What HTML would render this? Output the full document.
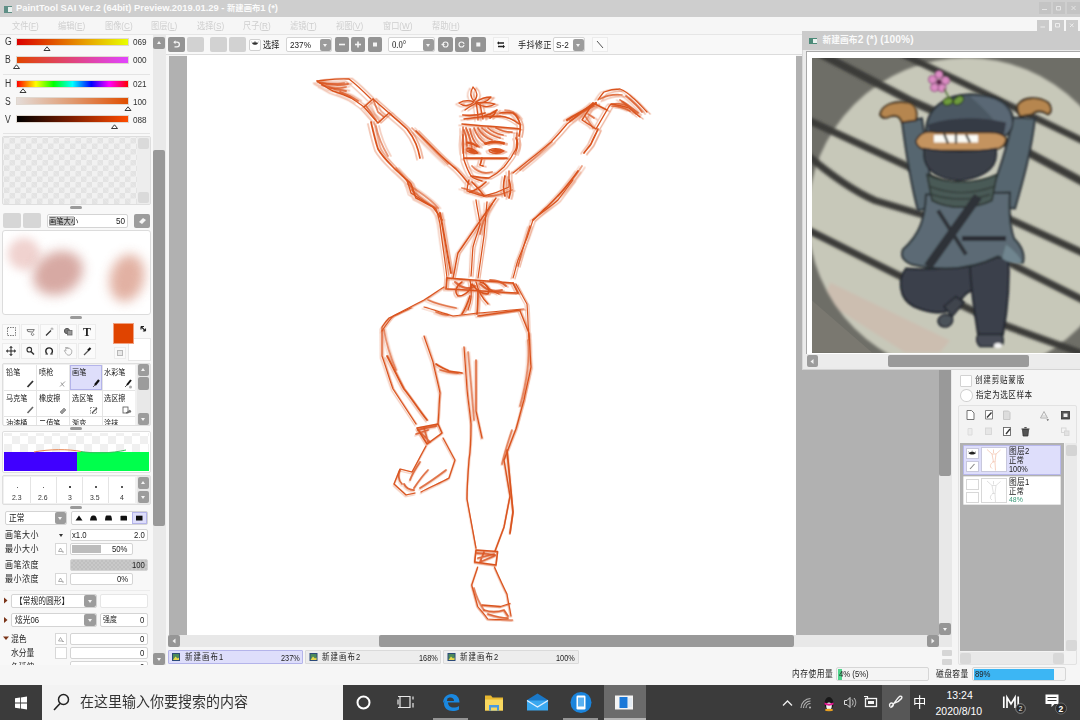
<!DOCTYPE html>
<html lang="zh-CN">
<head>
<meta charset="utf-8">
<title>PaintTool SAI</title>
<style>
*{box-sizing:border-box;margin:0;padding:0}
html,body{width:1080px;height:720px;overflow:hidden;background:#f6f6f6}
body{position:relative;font-family:"Liberation Sans","Noto Sans CJK SC",sans-serif;font-size:9px;color:#222;line-height:1}
.a{position:absolute}
.t{position:absolute;white-space:nowrap;line-height:1;transform:scaleX(.86);transform-origin:0 0}
.btn{position:absolute;background:#969696;border-radius:2px}
.btnl{position:absolute;background:#d2d2d2;border-radius:2px}
.fld{position:absolute;background:#fff;border:1px solid #d4d4d4;border-radius:2px}
.grip{position:absolute;width:12px;height:3px;background:#9a9a9a;border-radius:2px;left:70px}
.wbtn{position:absolute;width:12px;height:11px;background:#c4c4c4}
.ic{position:absolute;background:#fbfbfb;border:1px solid #ececec}
.arr{position:absolute;width:0;height:0;border-left:2.5px solid transparent;border-right:2.5px solid transparent;border-top:3px solid #f4f4f4}
.arru{position:absolute;width:0;height:0;border-left:2.5px solid transparent;border-right:2.5px solid transparent;border-bottom:3px solid #f4f4f4}
</style>
</head>
<body>

<!-- ================= TITLE BAR ================= -->
<div class="a" id="titlebar" style="left:0;top:0;width:1080px;height:17px;background:#cecece"></div>
<div class="a" style="left:3.500px;top:6px;width:8px;height:6.500px;background:#5f8f86"></div>
<div class="a" style="left:7.500px;top:7px;width:4px;height:4.500px;background:#e8f0ee"></div>
<div class="t" style="left:16px;top:3px;font-size:9.4px;font-weight:bold;color:#fbfbfb;transform:none">PaintTool SAI Ver.2 (64bit) Preview.2019.01.29 - <span style="font-size:8.300px">新建画布</span>1 (*)</div>
<div class="wbtn" style="left:1039px;top:2px;width:11.500px;height:12px"></div>
<div class="wbtn" style="left:1052.500px;top:2px;width:12px;height:12px"></div>
<div class="wbtn" style="left:1066.500px;top:2px;width:13.500px;height:12px"></div>


<!-- ================= MENU BAR ================= -->
<div class="a" id="menubar" style="left:0;top:17px;width:1080px;height:17px;background:#f6f6f6"></div>
<div class="a" style="left:0;top:34px;width:1080px;height:1px;background:#e6e6e6"></div>
<div class="t" style="left:12px;top:21px;font-size:9.5px;color:#cfcfcf">文件(<u>F</u>)</div>
<div class="t" style="left:58px;top:21px;font-size:9.5px;color:#cfcfcf">编辑(<u>E</u>)</div>
<div class="t" style="left:105px;top:21px;font-size:9.5px;color:#cfcfcf">图像(<u>C</u>)</div>
<div class="t" style="left:151px;top:21px;font-size:9.5px;color:#cfcfcf">图层(<u>L</u>)</div>
<div class="t" style="left:197px;top:21px;font-size:9.5px;color:#cfcfcf">选择(<u>S</u>)</div>
<div class="t" style="left:243px;top:21px;font-size:9.5px;color:#cfcfcf">尺子(<u>R</u>)</div>
<div class="t" style="left:290px;top:21px;font-size:9.5px;color:#cfcfcf">滤镜(<u>T</u>)</div>
<div class="t" style="left:336px;top:21px;font-size:9.5px;color:#cfcfcf">视图(<u>V</u>)</div>
<div class="t" style="left:383px;top:21px;font-size:9.5px;color:#cfcfcf">窗口(<u>W</u>)</div>
<div class="t" style="left:432px;top:21px;font-size:9.5px;color:#cfcfcf">帮助(<u>H</u>)</div>
<div class="wbtn" style="left:1037px;top:19.500px;width:11.500px;height:11.500px;background:#cbcbcb"></div>
<div class="wbtn" style="left:1051.500px;top:19.500px;width:12px;height:11.500px;background:#cbcbcb"></div>
<div class="wbtn" style="left:1066px;top:19.500px;width:11.500px;height:11.500px;background:#cbcbcb"></div>

<svg class="a" style="left:1036px;top:0" width="44" height="34" viewBox="1036 0 44 34" fill="none" stroke="#e4e4e4" stroke-width="1"><path d="M1042 9.500h5M1056.500 6.500h4v3.500h-4zM1071.500 6l4 4M1075.500 6l-4 4"/><path d="M1040.500 27h4.500M1055.500 23.500h4v3.500h-4zM1070 23.500l3.500 3.500M1073.500 23.500l-3.500 3.500" stroke="#ededed"/></svg>

<!-- ================= LEFT PANEL ================= -->
<div class="a" id="leftpanel" style="left:0;top:35px;width:153px;height:630px;background:#f8f8f8"></div>
<!-- color sliders -->
<div class="t" style="left:5px;top:37px;font-size:10px;color:#333">G</div>
<div class="a" style="left:16px;top:38px;width:113px;height:8px;border:1px solid #e0d8d0;background:linear-gradient(90deg,#dc0000,#e04400 27%,#e8a000 62%,#e8ff00)"></div>
<div class="t" style="left:133px;top:37px;font-size:9.5px;color:#333">069</div>
<div class="t" style="left:5px;top:55px;font-size:10px;color:#333">B</div>
<div class="a" style="left:16px;top:56px;width:113px;height:8px;border:1px solid #e0d8d0;background:linear-gradient(90deg,#e04400,#e0447c 50%,#e044ff)"></div>
<div class="t" style="left:133px;top:55px;font-size:9.5px;color:#333">000</div>
<div class="a" style="left:3px;top:74px;width:147px;height:1px;background:#e4e4e4"></div>
<div class="t" style="left:5px;top:79px;font-size:10px;color:#333">H</div>
<div class="a" style="left:16px;top:80px;width:113px;height:8px;border:1px solid #e0d8d0;background:linear-gradient(90deg,#f00,#ff0 17%,#0f0 33%,#0ff 50%,#00f 67%,#f0f 83%,#f00)"></div>
<div class="t" style="left:133px;top:79px;font-size:9.5px;color:#333">021</div>
<div class="t" style="left:5px;top:97px;font-size:10px;color:#333">S</div>
<div class="a" style="left:16px;top:97px;width:113px;height:8px;border:1px solid #e0d8d0;background:linear-gradient(90deg,#e4dcd8,#e09a70 50%,#e04e00)"></div>
<div class="t" style="left:133px;top:97px;font-size:9.5px;color:#333">100</div>
<div class="t" style="left:5px;top:115px;font-size:10px;color:#333">V</div>
<div class="a" style="left:16px;top:115px;width:113px;height:8px;border:1px solid #e0d8d0;background:linear-gradient(90deg,#000,#801e00 50%,#ff4c00)"></div>
<div class="t" style="left:133px;top:115px;font-size:9.5px;color:#333">088</div>
<svg class="a" style="left:0;top:35px" width="153" height="100" viewBox="0 35 153 100">
 <g fill="#fff" stroke="#222" stroke-width="0.9">
  <path d="M44 50.5 l3-3.7 l3 3.7z"/><path d="M13.5 68.5 l3-3.7 l3 3.7z"/><path d="M20 92.5 l3-3.7 l3 3.7z"/><path d="M125 110.5 l3-3.7 l3 3.7z"/><path d="M111.5 128.5 l3-3.7 l3 3.7z"/>
 </g>
</svg>
<div class="a" style="left:3px;top:133px;width:147px;height:1px;background:#e4e4e4"></div>
<!-- swatch panel -->
<div class="a" style="left:2px;top:136px;width:149px;height:69px;border:1px solid #dedede;border-radius:2px;background-color:#f1f1f1;background-image:linear-gradient(45deg,#e3e3e3 25%,transparent 25%,transparent 75%,#e3e3e3 75%),linear-gradient(45deg,#e3e3e3 25%,transparent 25%,transparent 75%,#e3e3e3 75%);background-size:11px 11px;background-position:1px 1px,6.5px 6.5px"></div>
<div class="a" style="left:137px;top:137px;width:13px;height:67px;background:#ededed"></div>
<div class="a" style="left:138px;top:138px;width:11px;height:11px;background:#dadada;border-radius:2px"></div>
<div class="a" style="left:138px;top:192px;width:11px;height:11px;background:#dadada;border-radius:2px"></div>
<div class="grip" style="top:206px"></div>
<!-- scratch header row -->
<div class="btnl" style="left:3px;top:213px;width:18px;height:15px;background:#d6d6d6"></div>
<div class="btnl" style="left:23px;top:213px;width:18px;height:15px;background:#d6d6d6"></div>
<div class="fld" style="left:47px;top:214px;width:81px;height:14px"></div>
<div class="a" style="left:48.5px;top:216px;width:25px;height:10px;background:#c4c4c4"></div>
<div class="t" style="left:49px;top:216.5px;font-size:8.5px;color:#222">画笔大小</div>
<div class="t" style="left:115.5px;top:216px;font-size:9.5px;color:#222">50</div>
<div class="btn" style="left:134px;top:214px;width:16px;height:14px;background:#9c9c9c"></div>
<svg class="a" style="left:138px;top:217px" width="9" height="8" viewBox="0 0 9 8"><path d="M1 5 L5 1 L8 3 L4 7z" fill="#f4f4f4"/></svg>
<!-- scratchpad -->
<div class="a" style="left:2px;top:230px;width:149px;height:85px;border:1px solid #dcdcdc;border-radius:3px;background:#fff;overflow:hidden">
 <div class="a" style="left:5px;top:7px;width:32px;height:32px;border-radius:50%;background:#ebc3bf;filter:blur(5px);opacity:.75"></div>
 <div class="a" style="left:29px;top:21px;width:52px;height:42px;border-radius:50%;background:#d3a099;filter:blur(6px);opacity:.9;transform:rotate(-28deg)"></div>
 <div class="a" style="left:107px;top:23px;width:34px;height:48px;border-radius:50%;background:#dfa999;filter:blur(6px);opacity:.9;transform:rotate(14deg)"></div>
</div>
<div class="grip" style="top:316px"></div>

<!-- tool icon rows -->
<div class="ic" style="left:2px;top:324px;width:18px;height:16px"></div>
<div class="ic" style="left:21px;top:324px;width:18px;height:16px"></div>
<div class="ic" style="left:40px;top:324px;width:18px;height:16px"></div>
<div class="ic" style="left:59px;top:324px;width:18px;height:16px"></div>
<div class="ic" style="left:78px;top:324px;width:18px;height:16px"></div>
<div class="ic" style="left:2px;top:343px;width:18px;height:16px"></div>
<div class="ic" style="left:21px;top:343px;width:18px;height:16px"></div>
<div class="ic" style="left:40px;top:343px;width:18px;height:16px"></div>
<div class="ic" style="left:59px;top:343px;width:18px;height:16px"></div>
<div class="ic" style="left:78px;top:343px;width:18px;height:16px"></div>
<svg class="a" style="left:0;top:320px" width="153" height="42" viewBox="0 320 153 42" fill="none" stroke="#333" stroke-width="1">
 <rect x="7.500" y="327.500" width="8" height="8" stroke-dasharray="1.500 1" stroke="#5a5a5a" stroke-width="0.800"/>
 <path d="M27 329.600h7.300l-1.600 2.500l-4.900-.600z" stroke="#666" stroke-width="0.900"/><path d="M32.500 332.600c-1.600 1-1.500 2.600 0 2.800c1.300 0 1.600-1 .8-1.900" stroke="#666" stroke-width="0.900"/>
 <path d="M46 335.5l5-5" stroke="#333" stroke-width="1.3"/><path d="M52 327.5v2M50.5 329h3" stroke="#888" stroke-width="0.7"/>
 <circle cx="67" cy="331" r="2.6" fill="#777" stroke="#555"/><rect x="67.5" y="330.500" width="4.500" height="4.500" fill="#999" stroke="#666" stroke-width="0.8"/>
 <path d="M11 346.500v9M6.500 351h9M11 346.500l-1.300 1.500M11 346.500l1.300 1.500M11 355.500l-1.300-1.500M11 355.500l1.300-1.500M6.500 351l1.500-1.300M6.500 351l1.500 1.300M15.500 351l-1.500-1.300M15.500 351l-1.500 1.300" stroke="#222" stroke-width="1"/>
 <circle cx="29.300" cy="349.700" r="2.300" stroke="#333" stroke-width="1.100"/><path d="M31 351.500l3 3" stroke="#333" stroke-width="1.500"/>
 <path d="M46.800 353.500a3.300 3.300 0 1 1 4.600 0" stroke="#222" stroke-width="1.400"/><path d="M45.500 354h2.500M50.200 354h2.500" stroke="#222" stroke-width="1"/>
 <path d="M65.600 349.200c.5-1.500 2-1.500 2.500-.5c.8-.8 2-.5 2.200.5c1 0 1.500.8 1.500 2c0 2.500-1 4-3 4c-1.500 0-2.500-1-3.200-2.500l-1.300-2c.5-.8 1.300-.5 1.800 0z" stroke="#a4a4a4" stroke-width="0.900"/><path d="M65 347.800h3.500" stroke="#8a8a8a" stroke-width="0.800"/>
 <path d="M84 355l4.500-4.500" stroke="#555" stroke-width="1.200"/><path d="M88 350.500l2.500-2.500" stroke="#111" stroke-width="2.200"/>
 <path d="M141 326.500l4.500 4.500M141 326.500v3M141 326.500h3M145.500 331v-2.600M145.500 331h-2.600" stroke="#222" stroke-width="1.100"/>
</svg>
<div class="t" style="left:82.500px;top:326px;font-family:'Liberation Serif',serif;font-weight:bold;font-size:12px;color:#222;transform:scaleX(.98)">T</div>
<!-- color swatches -->
<div class="a" style="left:128px;top:338px;width:23px;height:23px;background:#fff;border:1px solid #e6e6e6"></div>
<div class="a" style="left:113px;top:323px;width:21px;height:21px;background:#e04400;border:1px solid #f0a080"></div>
<div class="ic" style="left:114px;top:347px;width:12px;height:12px;background:#fafafa"></div>
<div class="a" style="left:117px;top:350px;width:6px;height:6px;background:#e8e8e8;border:1px solid #b8b8b8"></div>
<!-- brush tool grid -->
<div class="a" style="left:2px;top:363px;width:149px;height:63px;border:1px solid #dedede;border-radius:2px;background:#f1f1f1"></div>
<div class="a" style="left:4px;top:365px;width:131px;height:60px;background:#e4e4e4;overflow:hidden">
 <div class="a" style="left:0;top:0;width:32px;height:25px;background:#fff"></div>
 <div class="a" style="left:33px;top:0;width:32px;height:25px;background:#fff"></div>
 <div class="a" style="left:66px;top:0;width:32px;height:25px;background:#dedefb;border:1px solid #b4b4ea"></div>
 <div class="a" style="left:99px;top:0;width:32px;height:25px;background:#fff"></div>
 <div class="a" style="left:0;top:26px;width:32px;height:25px;background:#fff"></div>
 <div class="a" style="left:33px;top:26px;width:32px;height:25px;background:#fff"></div>
 <div class="a" style="left:66px;top:26px;width:32px;height:25px;background:#fff"></div>
 <div class="a" style="left:99px;top:26px;width:32px;height:25px;background:#fff"></div>
 <div class="a" style="left:0;top:52px;width:32px;height:25px;background:#fff"></div>
 <div class="a" style="left:33px;top:52px;width:32px;height:25px;background:#fff"></div>
 <div class="a" style="left:66px;top:52px;width:32px;height:25px;background:#fff"></div>
 <div class="a" style="left:99px;top:52px;width:32px;height:25px;background:#fff"></div>
 <div class="t" style="left:2px;top:3px;font-size:8.300px;color:#222">铅笔</div>
 <div class="t" style="left:35px;top:3px;font-size:8.300px;color:#222">喷枪</div>
 <div class="t" style="left:68px;top:3px;font-size:8.300px;color:#222">画笔</div>
 <div class="t" style="left:100px;top:3px;font-size:8.300px;color:#222">水彩笔</div>
 <div class="t" style="left:2px;top:29px;font-size:8.300px;color:#222">马克笔</div>
 <div class="t" style="left:35px;top:29px;font-size:8.300px;color:#222">橡皮擦</div>
 <div class="t" style="left:68px;top:29px;font-size:8.300px;color:#222">选区笔</div>
 <div class="t" style="left:100px;top:29px;font-size:8.300px;color:#222">选区擦</div>
 <div class="t" style="left:2px;top:54px;font-size:8.300px;color:#222">油漆桶</div>
 <div class="t" style="left:35px;top:54px;font-size:8.300px;color:#222">二值笔</div>
 <div class="t" style="left:68px;top:54px;font-size:8.300px;color:#222">渐变</div>
 <div class="t" style="left:100px;top:54px;font-size:8.300px;color:#222">涂抹</div>
 <svg class="a" style="left:0;top:0" width="131" height="60" viewBox="0 0 131 60" fill="none">
  <path d="M23.500 22l5.500-6" stroke="#333" stroke-width="1.800"/>
  <path d="M56 21.500l5-5M57 17.500l3 4" stroke="#999" stroke-width="1"/>
  <path d="M89 22l2-2" stroke="#555" stroke-width="1"/><path d="M91 20l4-5" stroke="#111" stroke-width="2.200"/>
  <path d="M121 22l2-2" stroke="#555" stroke-width="1"/><path d="M123 20l4-5" stroke="#111" stroke-width="2"/><circle cx="126.500" cy="22" r="1.500" fill="#aaa"/>
  <path d="M23.500 48l5.500-6" stroke="#666" stroke-width="1.600"/>
  <path d="M56 47l4-4l2 2l-4 4z" fill="#999" stroke="#777" stroke-width="0.600"/>
  <rect x="86.500" y="42.500" width="6" height="6" stroke="#777" stroke-width="0.800" stroke-dasharray="1.500 1"/><path d="M88 48l5-5" stroke="#555" stroke-width="1.200"/>
  <rect x="119" y="42" width="5" height="6" stroke="#555" stroke-width="0.800"/><path d="M122 48l4-3l1 2z" fill="#777" stroke="#555" stroke-width="0.600"/>
 </svg>
</div>
<div class="a" style="left:137px;top:364px;width:13px;height:61px;background:#e8e8e8"></div>
<div class="btn" style="left:138px;top:364px;width:11px;height:12px;background:#9c9c9c"></div><div class="arru" style="left:141px;top:368px"></div>
<div class="btn" style="left:138px;top:377px;width:11px;height:13px;background:#9c9c9c"></div>
<div class="btn" style="left:138px;top:413px;width:11px;height:12px;background:#9c9c9c"></div><div class="arr" style="left:141px;top:418px"></div>
<div class="grip" style="top:427px"></div>

<!-- brush preview -->
<div class="a" style="left:2px;top:431px;width:149px;height:42px;border:1px solid #dedede;border-radius:2px;background:#fff"></div>
<div class="a" style="left:4px;top:433px;width:145px;height:19px;background-color:#fff;background-image:linear-gradient(45deg,#f0f0f0 25%,transparent 25%,transparent 75%,#f0f0f0 75%),linear-gradient(45deg,#f0f0f0 25%,transparent 25%,transparent 75%,#f0f0f0 75%);background-size:16px 16px;background-position:0 3px,8px 11px"></div>
<div class="a" style="left:4px;top:452px;width:73px;height:19px;background:#4000ff"></div>
<div class="a" style="left:77px;top:452px;width:72px;height:19px;background:#00ff4c"></div>
<svg class="a" style="left:4px;top:447px" width="145" height="8" viewBox="0 0 145 8" fill="none"><path d="M30 5c15-3 35-3 47-.5" stroke="#e8804c" stroke-width="1"/><path d="M77 4.500c12 2 30 2 45-1.500" stroke="#3cc060" stroke-width="1"/></svg>
<!-- size presets -->
<div class="a" style="left:2px;top:475px;width:149px;height:30px;border:1px solid #dedede;border-radius:2px;background:#f1f1f1"></div>
<div class="a" style="left:4px;top:477px;width:131px;height:26px;background:#e4e4e4">
 <div class="a" style="left:0;top:0;width:26px;height:26px;background:#fff"></div>
 <div class="a" style="left:27px;top:0;width:25px;height:26px;background:#fff"></div>
 <div class="a" style="left:53px;top:0;width:25px;height:26px;background:#fff"></div>
 <div class="a" style="left:79px;top:0;width:25px;height:26px;background:#fff"></div>
 <div class="a" style="left:105px;top:0;width:26px;height:26px;background:#fff"></div>
 <div class="a" style="left:13px;top:9.500px;width:1.200px;height:1.200px;background:#333;border-radius:50%"></div>
 <div class="a" style="left:39px;top:9.500px;width:1.400px;height:1.400px;background:#333;border-radius:50%"></div>
 <div class="a" style="left:65px;top:9.300px;width:1.600px;height:1.600px;background:#222;border-radius:50%"></div>
 <div class="a" style="left:91px;top:9.200px;width:1.900px;height:1.900px;background:#222;border-radius:50%"></div>
 <div class="a" style="left:117px;top:9px;width:2.200px;height:2.200px;background:#222;border-radius:50%"></div>
 <div class="t" style="left:8px;top:16.500px;font-size:8px;color:#333">2.3</div>
 <div class="t" style="left:34px;top:16.500px;font-size:8px;color:#333">2.6</div>
 <div class="t" style="left:63.500px;top:16.500px;font-size:8px;color:#333">3</div>
 <div class="t" style="left:86px;top:16.500px;font-size:8px;color:#333">3.5</div>
 <div class="t" style="left:115.500px;top:16.500px;font-size:8px;color:#333">4</div>
</div>
<div class="a" style="left:137px;top:476px;width:13px;height:28px;background:#e8e8e8"></div>
<div class="btn" style="left:138px;top:477px;width:11px;height:12px;background:#9c9c9c"></div><div class="arru" style="left:141px;top:481px"></div>
<div class="btn" style="left:138px;top:491px;width:11px;height:12px;background:#9c9c9c"></div><div class="arr" style="left:141px;top:496px"></div>
<div class="grip" style="top:506px"></div>
<!-- blend mode + shapes -->
<div class="fld" style="left:5px;top:511px;width:62px;height:14px"></div>
<div class="t" style="left:9px;top:513.500px;font-size:9px;color:#222">正常</div>
<div class="btn" style="left:55px;top:512px;width:11px;height:12px;background:#9c9c9c"></div><div class="arr" style="left:58px;top:517px"></div>
<div class="fld" style="left:71px;top:511px;width:77px;height:14px"></div>
<div class="a" style="left:132px;top:512px;width:15px;height:12px;background:#dedefb;border:1px solid #b4b4ea"></div>
<svg class="a" style="left:71px;top:511px" width="77" height="14" viewBox="0 0 77 14" fill="#111"><path d="M4.500 9.500l3.500-5l3.500 5z"/><path d="M19 9.500c.500-4 1.500-5 3.500-5s3 1 3.500 5z"/><path d="M34 9.500c.300-4 .800-5 1.800-5h3.400c1 0 1.500 1 1.800 5z"/><path d="M49.500 9.500v-4q0-.8 .8-.8h4.900q.8 0 .8.800v4z"/><rect x="65" y="4.700" width="6.500" height="4.800"/></svg>
<!-- brush params -->
<div class="t" style="left:5px;top:530.500px;font-size:9.300px;color:#222;letter-spacing:.6px">画笔大小</div>
<div class="arr" style="left:58.500px;top:534px;border-top-color:#333"></div>
<div class="fld" style="left:70px;top:529px;width:78px;height:12px"></div>
<div class="t" style="left:72px;top:531px;font-size:9px;color:#222">x1.0</div>
<div class="t" style="left:133.500px;top:531px;font-size:9px;color:#222">2.0</div>
<div class="t" style="left:5px;top:544.500px;font-size:9.300px;color:#222;letter-spacing:.6px">最小大小</div>
<div class="ic" style="left:55px;top:543px;width:12px;height:12px;background:#fff;border-color:#d8d8d8"></div>
<div class="fld" style="left:70px;top:543px;width:63px;height:12px"></div>
<div class="a" style="left:72px;top:545px;width:29px;height:8px;background:#bcbcbc"></div>
<div class="t" style="left:112px;top:545px;font-size:9px;color:#222">50%</div>
<div class="t" style="left:5px;top:560.500px;font-size:9.300px;color:#222;letter-spacing:.6px">画笔浓度</div>
<div class="fld" style="left:70px;top:559px;width:78px;height:12px;background:#c9c9c9;background-image:linear-gradient(45deg,#c0c0c0 25%,transparent 25%,transparent 75%,#c0c0c0 75%),linear-gradient(45deg,#c0c0c0 25%,transparent 25%,transparent 75%,#c0c0c0 75%);background-size:4px 4px;background-position:0 0,2px 2px"></div>
<div class="t" style="left:131.500px;top:561px;font-size:9px;color:#222">100</div>
<div class="t" style="left:5px;top:574.500px;font-size:9.300px;color:#222;letter-spacing:.6px">最小浓度</div>
<div class="ic" style="left:55px;top:573px;width:12px;height:12px;background:#fff;border-color:#d8d8d8"></div>
<div class="fld" style="left:70px;top:573px;width:63px;height:12px"></div>
<div class="t" style="left:117px;top:575px;font-size:9px;color:#222">0%</div>
<div class="a" style="left:3px;top:590px;width:147px;height:1px;background:#ececec"></div>

<div class="fld" style="left:11px;top:594px;width:86px;height:14px"></div>
<div class="t" style="left:15px;top:596.500px;font-size:9px;color:#222">【常规的圆形】</div>
<div class="btn" style="left:84px;top:595px;width:12px;height:12px;background:#9c9c9c"></div><div class="arr" style="left:87.500px;top:600px"></div>
<div class="fld" style="left:100px;top:594px;width:48px;height:14px;border-color:#e6e6e6"></div>
<div class="fld" style="left:11px;top:613px;width:86px;height:14px"></div>
<div class="t" style="left:15px;top:615.500px;font-size:9px;color:#222">炫光06</div>
<div class="btn" style="left:84px;top:614px;width:12px;height:12px;background:#9c9c9c"></div><div class="arr" style="left:87.500px;top:619px"></div>
<div class="fld" style="left:100px;top:613px;width:48px;height:14px"></div>
<div class="t" style="left:103px;top:616px;font-size:8px;color:#222">强度</div>
<div class="t" style="left:140px;top:615.500px;font-size:9px;color:#222">0</div>
<div class="t" style="left:11px;top:634.500px;font-size:9px;color:#222">混色</div>
<div class="ic" style="left:55px;top:633px;width:12px;height:12px;background:#fff;border-color:#d8d8d8"></div>
<div class="fld" style="left:70px;top:633px;width:78px;height:12px"></div>
<div class="t" style="left:140px;top:635px;font-size:9px;color:#222">0</div>
<div class="t" style="left:11px;top:648.500px;font-size:9px;color:#222">水分量</div>
<div class="ic" style="left:55px;top:647px;width:12px;height:12px;background:#fff;border-color:#d8d8d8"></div>
<div class="fld" style="left:70px;top:647px;width:78px;height:12px"></div>
<div class="t" style="left:140px;top:649px;font-size:9px;color:#222">0</div>
<div class="a" style="left:0;top:661px;width:153px;height:4px;overflow:hidden"><div class="t" style="left:11px;top:1.500px;font-size:9px;color:#222">色延伸</div><div class="fld" style="left:70px;top:0;width:78px;height:12px"></div><div class="t" style="left:140px;top:2px;font-size:9px;color:#222">0</div></div>


<svg class="a" style="left:0;top:540px" width="153" height="125" viewBox="0 540 153 125"><g fill="#7a3418"><path d="M4 597.500l3.500 3l-3.500 3z"/><path d="M4 617l3.500 3l-3.500 3z"/><path d="M3 636.500h6l-3 3.500z"/></g>
<g fill="none" stroke="#999" stroke-width="0.800"><path d="M58.500 551.500l2-3.500l2 3.500zM62 552h2"/><path d="M58.500 581.500l2-3.500l2 3.500zM62 582h2"/><path d="M58.500 641l2-3.500l2 3.500zM62 641.500h2"/></g></svg>
<!-- left panel scrollbar -->
<div class="a" style="left:153px;top:35px;width:13px;height:630px;background:#e9e9e9"></div>
<div class="btn" style="left:153px;top:37px;width:12px;height:12px"></div>
<div class="arru" style="left:156.5px;top:41px"></div>
<div class="a" style="left:153px;top:150px;width:12px;height:376px;background:#999;border-radius:2px"></div>
<div class="btn" style="left:153px;top:653px;width:12px;height:12px"></div>
<div class="arr" style="left:156.5px;top:658px"></div>

<!-- ================= TOOLBAR ================= -->
<div class="a" id="toolbar" style="left:166px;top:35px;width:914px;height:19px;background:#f8f8f8"></div>
<div class="a" style="left:166px;top:54px;width:914px;height:1px;background:#dcdcdc"></div>
<div class="btn" style="left:168px;top:37px;width:17px;height:15px;background:#949494"></div>
<div class="btnl" style="left:187px;top:37px;width:17px;height:15px"></div>
<div class="btnl" style="left:210px;top:37px;width:17px;height:15px"></div>
<div class="btnl" style="left:229px;top:37px;width:17px;height:15px"></div>
<div class="fld" style="left:249px;top:39px;width:12px;height:12px;border-color:#d0d0d0"></div>
<div class="t" style="left:263px;top:39.500px;font-size:9.500px;color:#222">选择</div>
<div class="fld" style="left:286px;top:37px;width:46px;height:15px"></div>
<div class="t" style="left:290px;top:40px;font-size:9.500px;color:#222">237%</div>
<div class="btn" style="left:320px;top:38.500px;width:11px;height:12px;background:#9c9c9c"></div><div class="arr" style="left:323px;top:43.500px"></div>
<div class="btn" style="left:335px;top:37px;width:14px;height:15px;background:#949494"></div>
<div class="btn" style="left:351px;top:37px;width:14px;height:15px;background:#949494"></div>
<div class="btn" style="left:368px;top:37px;width:14px;height:15px;background:#949494"></div>
<div class="fld" style="left:388px;top:37px;width:47px;height:15px"></div>
<div class="t" style="left:392px;top:39.500px;font-size:10px;color:#222;font-family:'Liberation Serif',serif">0.0°</div>
<div class="btn" style="left:423px;top:38.500px;width:11px;height:12px;background:#9c9c9c"></div><div class="arr" style="left:426px;top:43.500px"></div>
<div class="btn" style="left:438px;top:37px;width:14.500px;height:15px;background:#949494"></div>
<div class="btn" style="left:454.500px;top:37px;width:14.500px;height:15px;background:#949494"></div>
<div class="btn" style="left:471px;top:37px;width:14.500px;height:15px;background:#949494"></div>
<div class="ic" style="left:493px;top:37px;width:16px;height:15px"></div>
<div class="t" style="left:517.500px;top:39.500px;font-size:9.500px;color:#222;letter-spacing:.3px">手抖修正</div>
<div class="fld" style="left:553px;top:37px;width:32px;height:15px"></div>
<div class="t" style="left:556px;top:40px;font-size:9.500px;color:#222">S-2</div>
<div class="btn" style="left:573px;top:38.500px;width:11px;height:12px;background:#9c9c9c"></div><div class="arr" style="left:576px;top:43.500px"></div>
<div class="ic" style="left:592px;top:37px;width:16px;height:15px"></div>
<svg class="a" style="left:166px;top:35px" width="460" height="19" viewBox="166 35 460 19" fill="none">
 <path d="M174.500 46.800h2.600a2.300 2.300 0 0 0 0-4.600h-2.600" stroke="#f4f4f4" stroke-width="1.300"/><path d="M175.500 40.200l-2.200 2l2.200 2z" fill="#f4f4f4"/>
 <path d="M252 43.500c1.500-1.800 4.500-1.800 6 0c-1.500 1.800-4.500 1.800-6 0z" fill="#333"/><path d="M251.500 42l1.200 1M258.500 42l-1.200 1M255 41v1.200" stroke="#555" stroke-width="0.700"/>
 <rect x="339" y="43.700" width="6" height="1.600" fill="#f4f4f4"/>
 <rect x="355" y="43.700" width="6" height="1.600" fill="#f4f4f4"/><rect x="357.200" y="41.500" width="1.600" height="6" fill="#f4f4f4"/>
 <rect x="373" y="42.500" width="4" height="4" fill="#f4f4f4"/>
 <circle cx="445.500" cy="44.500" r="2.500" stroke="#f4f4f4" stroke-width="1.200"/><path d="M441.500 44.500h3" stroke="#f4f4f4" stroke-width="1.200"/>
 <circle cx="461.500" cy="44.500" r="2.500" stroke="#f4f4f4" stroke-width="1.200"/><path d="M462.500 44.500h3" stroke="#9a9a9a" stroke-width="1.200"/>
 <rect x="476.300" y="42.500" width="4" height="4" fill="#f4f4f4"/>
 <path d="M498 43h6M498 46.500h6" stroke="#222" stroke-width="1.400"/><path d="M497 43l2-1.800v3.600zM505 46.500l-2-1.800v3.600z" fill="#222"/>
 <path d="M597 41l6 7" stroke="#555" stroke-width="1"/>
</svg>


<!-- ================= MAIN CANVAS ================= -->
<div class="a" id="pasteboard" style="left:168.600px;top:55.600px;width:770px;height:579.400px;background:#b1b1b1"></div>
<div class="a" id="canvas" style="left:187px;top:55px;width:609px;height:580px;background:#fff"></div>
<svg class="a" id="sketch" style="left:187px;top:55px" width="609" height="580" viewBox="187 55 609 580" fill="none" stroke="#da531e" stroke-width="1.750" stroke-linecap="round" stroke-linejoin="round">
 <defs><filter id="sb" x="-5%" y="-5%" width="110%" height="110%"><feGaussianBlur stdDeviation="0.650"/></filter></defs>
 <g filter="url(#sb)" id="skg">
 <!-- left arm + hand -->
 <path d="M317 81c10-1 22-3 32-2c8 6 15 13 22 20" stroke-width="1.300"/>
 <path d="M317 81c6 4 10 7 16 10c6 2 12 4 18 7c5 3 9 6 13 9" stroke-width="1.400"/>
 <path d="M320 83c8 1 16 1 24 0M330 88c6 1 12 0 16-1" opacity=".7"/>
 <path d="M364 107l9-8l16 14l-11 10z" stroke-width="1.500"/>
 <path d="M373 99l5 13l6 5M366 106l10 14" opacity=".7"/>
 <path d="M389 113c7 6 13 11 18 16c4 5 7 10 9 15c2 5 3 9 4 14" />
 <path d="M416 131c8 8 15 15 22 22c6 6 12 11 18 16c5 5 9 10 13 15"/>
 <path d="M412 128c10 10 22 24 36 36" opacity=".55"/>
 <path d="M371 122c2 9 4 18 7 27c4 7 9 12 15 18c6 6 12 11 18 17c2 5 3 9 5 14c6 3 11 6 17 9c3 4 6 8 9 13"/>
 <path d="M376 126c2 10 6 20 12 30M396 168c8 8 14 16 18 26" opacity=".6"/>
 <path d="M408 184c10 8 22 14 30 24" opacity=".6"/>
 <!-- head -->
 <path d="M462 124c20 2 40 3 58 5" stroke-width="1.500"/>
 <path d="M464 119c12-2 24-3 36-3c8 1 14 4 19 8" stroke-width="1.300"/>
 <path d="M500 113c5-1 9-1 13 0c4 3 6 7 7 11c1 4 0 8-1 12" />
 <path d="M505 110c6 0 11 3 14 8" opacity=".6"/>
 <path d="M463 127c0 11 0 22 1 33c2 6 4 11 7 16c3 3 7 4 11 5" stroke-width="1.300"/>
 <path d="M471 176c6 1 12 2 18 2c6-3 11-7 15-11c5-6 9-12 12-18c1-5 1-11 1-16" stroke-width="1.300"/>
 <path d="M466 128c4 8 6 16 6 24M474 128c2 6 6 12 12 16M482 128c4 4 10 8 18 10" opacity=".8"/>
 <path d="M467 148c4 0 8 2 11 5c-4 1-8 0-11-2z" stroke-width="1.300"/>
 <path d="M489 150c5-2 10-2 15 1c-5 3-10 3-14 1z" stroke-width="1.300"/>
 <path d="M486 144c6-2 12-2 18 0M468 143c3 0 6 1 9 3" stroke-width="1.400"/>
 <path d="M464 158c14 0 28 0 43 0" />
 <path d="M482 158c-1 3-1 5-2 7l3 1" />
 <path d="M516 138c2 4 2 8 0 12" />
 <!-- flower on head -->
 <path d="M473 87c-3 5-3 10 1 14c4-4 4-9-1-14z" stroke-width="1.300"/>
 <path d="M459 103c5-3 10-3 15-1c-4 4-10 5-15 1z" stroke-width="1.300"/>
 <path d="M491 97c-6 0-11 2-15 5c5 2 11 0 15-5z" stroke-width="1.300"/>
 <path d="M495 104c-6-2-13-2-19-1c5 4 13 5 19 1z" stroke-width="1.300"/>
 <path d="M465 110c4-3 8-5 11-7M476 102c1 6 2 12 2 18M480 104c1 5 2 10 3 15" stroke-width="1.300"/>
 <path d="M463 115c8 1 16 0 22-2M484 116c5-1 9-3 13-6M490 118c3-2 5-4 6-7" />
 <!-- collar -->
 <path d="M469 180c-1 4-2 7-2 11c6 2 11 4 17 5c9-2 17-5 25-9c0-5 0-11 0-16" stroke-width="1.300"/>
 <path d="M472 182c4 4 8 8 12 14M486 182c-4 4-10 8-16 10M505 176c-2 8-2 14 0 20M509 180c2 6 2 12 0 18" />
 <path d="M462 188c8 2 16 5 24 8M488 196c8 0 16-2 24-6" opacity=".7"/>
 <!-- right arm + hand -->
 <path d="M513 173c5-4 11-9 16-13c8-6 15-12 22-18c6-6 11-12 16-18c9-7 17-14 26-21" stroke-width="1.300"/>
 <path d="M567 120c10-6 20-11 29-17" stroke-width="2.200"/>
 <path d="M570 121c8-6 16-11 24-15" stroke-width="1.600" opacity=".8"/>
 <path d="M520 170c10-8 22-18 32-28" opacity=".6"/>
 <path d="M593 103l14 7l-11 19l-14-9z" stroke-width="1.400"/>
 <path d="M585 116l8 12M588 114l6 4" opacity=".7"/>
 <path d="M598 100c2-3 4-6 6-8c5-2 11-3 16-3c5 2 9 5 13 9c5 4 9 9 14 14" stroke-width="1.300"/>
 <path d="M607 110c1-2 2-4 4-6c6 1 12 2 18 4c4 3 7 6 11 9" stroke-width="1.300"/>
 <path d="M612 104c6-1 12 0 16 2M620 100c6 3 12 8 18 13M626 96c6 5 12 10 16 16" opacity=".8"/>
 <path d="M598 129c-2 5-5 10-7 15c-2 3-5 6-7 9"/>
 <path d="M578 171c-4 6-9 12-14 18c-5 6-11 12-17 18c-5 4-9 9-14 13" />
 <path d="M582 166c-6 10-14 20-24 30" opacity=".55"/>
 <!-- torso -->
 <path d="M407 180c1 4 3 9 4 13c8 5 17 11 25 16c2 5 3 10 4 15c2 18 5 36 7 54" stroke-width="1.200"/>
 <path d="M440 213c4 20 7 40 11 60" stroke-width="1.900"/>
 <path d="M412 190c8 8 16 14 24 18" opacity=".6"/>
 <path d="M573 180c-5 7-10 13-15 20c-8 7-17 13-25 20c-2 6-4 12-6 18c-3 7-6 15-9 22c-2 6-3 12-5 18" stroke-width="1.200"/>
 <path d="M530 226c-4 12-8 26-12 40" stroke-width="1.500" opacity=".85"/>
 <path d="M476 200c1 8 3 16 4 24c-2 8-5 15-7 23c-1 10-1 19-2 29" stroke-width="1.300"/>
 <path d="M496 198c-6 9-12 17-18 26c-7 10-13 19-20 29c-2 8-3 17-5 25" stroke-width="1.500"/>
 <path d="M487 202c-1 11-2 23-3 34c-2 14-4 28-6 42" stroke-width="1.300"/>
 <path d="M492 204c-6 10-10 20-12 30" opacity=".7"/>
 <!-- belt -->
 <path d="M447 278c22 2 44 3 66 5" stroke-width="1.600"/>
 <path d="M447 289c24 1 47 3 71 4" stroke-width="1.500"/>
 <path d="M447 278l-1 11M513 283l5 10" />
 <path d="M462 282c-6 4-8 10-4 14c6 0 12-4 14-12c4 6 10 10 16 10c2-4 0-10-8-12" stroke-width="1.600"/>
 <path d="M470 280c2 10 2 20-2 30M476 282c2 8 6 16 12 22M483 282c4 6 10 10 16 12" stroke-width="1.300"/>
 <path d="M490 280c6 0 12 2 16 6" stroke-width="1.800" opacity=".8"/>
 <!-- tunic flare -->
 <path d="M444 287c-7 4-13 9-20 13c-10 5-21 11-31 16c-4 5-8 10-11 15" stroke-width="1.200"/>
 <path d="M516 284c4 7 7 13 11 20c1 12 1 24 2 36" stroke-width="1.200"/>
 <path d="M424 307c10 3 19 6 29 9c8-1 17-2 25-3c15-1 31-3 46-4" stroke-width="1.200"/>
 <path d="M428 300c8 4 18 6 28 8M436 312c4 2 8 3 12 3" opacity=".7"/>
 <path d="M478 290c0 8 0 16-1 24M470 296c-2 6-4 12-8 18" />
 <!-- raised leg -->
 <path d="M411 308c-7 3-15 7-22 10c-3 3-5 6-7 9c0 10 0 19 0 29c4 11 7 22 11 33c8 12 15 23 23 35" stroke-width="1.300"/>
 <path d="M387 356c6 11 11 22 17 33c8 10 15 21 23 31" />
 <path d="M384 330c2 12 6 26 12 40" opacity=".6"/>
 <path d="M424 336c3 9 6 17 9 26c2 10 5 21 7 31c-1 10-1 21-2 31" stroke-width="1.300"/>
 <path d="M436 364c4 3 9 5 13 7c4 1 9 1 13 2" stroke-width="1.700"/>
 <path d="M440 370c6 2 12 3 18 3" opacity=".7"/>
 <path d="M417 428l21-4l4 9l-15 11z" stroke-width="1.500"/>
 <path d="M420 432l10 10M424 428l4 14M416 434l12-4" opacity=".8"/>
 <path d="M426 446c-5 9-9 17-14 26c-4-1-8-2-12-3c-2 5-4 10-6 15c4 4 8 7 12 11c3-1 6-1 9-2" stroke-width="1.200"/>
 <path d="M443 438c4 7 8 15 12 22c-2 6-4 12-6 18c-9 5-19 9-28 14" stroke-width="1.200"/>
 <path d="M420 462c-4 6-8 12-10 18M428 470c-6 6-10 12-14 18M446 470c-8 6-16 12-26 18" opacity=".7"/>
 <path d="M400 470c-2 4-2 10 2 14M404 484c2 4 6 6 10 6" opacity=".8"/>
 <!-- standing leg -->
 <path d="M464 347c1 14 2 28 3 42c1 12 3 23 4 35c0 12 0 24-2 36c-1 13-2 26-2 39c3 16 6 33 9 49" stroke-width="1.300"/>
 <path d="M476 360c0 17 0 34 0 51c2 9 4 18 6 27" stroke-width="1.300"/>
 <path d="M468 352c2 20 4 44 6 68" opacity=".6"/>
 <path d="M520 311c3 7 6 15 9 22c1 11 1 23 2 34c-2 11-5 22-7 33c-3 10-5 19-8 29c-4 10-8 21-12 31c2 12 4 24 6 36c-2 10-4 21-6 31c-3 8-6 16-9 24" stroke-width="1.400"/>
 <path d="M528 340c2 20-2 44-8 66" opacity=".6"/>
 <path d="M478 316c14-2 28-4 42-6" />
 <path d="M507 450c2 21 4 41 6 62c-1 7-2 14-3 21" />
 <path d="M512 430c-4 12-8 24-10 34" opacity=".6"/>
 <!-- extra face / sketch detail -->
 <path d="M468.500 150c3-1 6 0 8 2c-3 1-6 1-8-2z" fill="#da531e" stroke-width="1"/>
 <path d="M491 150.500c4-1.500 8-1.500 12 .5c-4 2-8 2-12-.5z" fill="#da531e" stroke-width="1"/>
 <path d="M485 143.500c6-2.500 13-2.500 19-.5M467 142.500c4 0 7 1.500 10 4" stroke-width="2"/>
 <path d="M464 130c2 5 3 10 3 16M470 129c1 7 4 13 9 18M478 128c3 6 8 10 14 12M488 128c4 4 9 6 15 7M496 128c5 3 10 4 16 4" opacity=".8"/>
 <path d="M463 135c-1 6-1 12 0 18M517 140c1 5 0 10-2 14" opacity=".7"/>
 <path d="M472 166c5 6 12 8 20 6" opacity=".7"/>
 <path d="M318 82c10 3 20 4 30 2M322 85c8 3 16 5 24 6M340 92c6 2 12 5 18 9" stroke-width="1.900" opacity=".75"/>
 <path d="M600 99c6-3 14-5 22-4M612 106c6 0 12 2 18 5M622 102c5 3 10 7 14 12" stroke-width="1.700" opacity=".75"/>
 <path d="M455 282c6 6 14 8 20 4M480 284c6 6 14 8 22 6" stroke-width="2" opacity=".8"/>
 <path d="M418 430c6-2 12-3 18-4M477 553c6 0 12 1 18 2" stroke-width="2.200" opacity=".8"/>
  <!-- ankle cuff + foot -->
 <path d="M476 550l21.600 1.500l-1.600 13.500l-21.300-3z" stroke-width="1.500"/>
 <path d="M478 558l16-4M480 562l14-6M484 552l-4 10" opacity=".8"/>
 <path d="M477.700 567c-2 6-4 12-6 18c2 7 4 14 6 21.500c3 4 7 8 10 12.500c8 .5 17 .5 25 1" stroke-width="1.200"/>
 <path d="M494.500 567c4 9 8 18 12.500 27c1 7 3 15 4 22" stroke-width="1.200"/>
 <path d="M482 605c6 .5 12 1 18.600 1.500c3-1 6-2 9.400-3" stroke-width="1.300"/>
 <path d="M484 610c6 2 14 2 20 0l4 6M488 614c6 2 12 4 20 4" opacity=".85"/>
 <path d="M474 588c2 8 6 16 10 22" opacity=".6"/>
 </g>
 <use href="#skg" transform="translate(1.700 .600) rotate(.450 470 300)" opacity=".450"/>
 <use href="#skg" transform="translate(-1.300 1.100) rotate(-.400 500 380)" opacity=".330"/>
</svg>


<!-- canvas h-scroll -->
<div class="a" style="left:168px;top:635px;width:771px;height:12px;background:#e8e8e8"></div>
<div class="btn" style="left:168px;top:635px;width:12px;height:12px"></div>
<div class="a" style="left:379px;top:635px;width:415px;height:12px;background:#999;border-radius:2px"></div>
<div class="btn" style="left:927px;top:635px;width:12px;height:12px"></div>
<svg class="a" style="left:168px;top:635px" width="771" height="12" viewBox="0 0 771 12"><path d="M7.500 3.500v5l-3-2.500z" fill="#f0f0f0"/><path d="M763.500 3.500v5l3-2.500z" fill="#f0f0f0"/></svg>
<!-- canvas v-scroll -->
<div class="a" style="left:939px;top:367px;width:13px;height:280px;background:#e8e8e8"></div>
<div class="a" style="left:939px;top:369px;width:12px;height:107px;background:#999;border-radius:0 0 2px 2px"></div>
<div class="btn" style="left:939px;top:623px;width:12px;height:12px"></div>
<div class="arr" style="left:942.5px;top:628px"></div>
<div class="a" style="left:942px;top:650px;width:10px;height:6px;background:#d6d6d6;border-radius:1px"></div>
<div class="a" style="left:942px;top:659px;width:10px;height:6px;background:#d6d6d6;border-radius:1px"></div>

<!-- tabs -->
<div class="a" style="left:166px;top:647px;width:773px;height:18px;background:#f6f6f6"></div>
<div class="a" style="left:168px;top:650px;width:135px;height:14px;background:#dedefb;border:1px solid #b4b4ea;border-radius:1px"></div>
<div class="a" style="left:305px;top:650px;width:135.500px;height:14px;background:#ededed;border:1px solid #dadada;border-radius:1px"></div>
<div class="a" style="left:443px;top:650px;width:135.500px;height:14px;background:#ededed;border:1px solid #dadada;border-radius:1px"></div>
<svg class="a" style="left:166px;top:650px" width="420" height="14" viewBox="166 650 420 14">
 <g id="tabico"><rect x="172.500" y="653.500" width="7" height="7" fill="#4c8a5c" stroke="#2c4a7a" stroke-width="1"/><path d="M173 660l2.500-3.500l2 2l1.500-1v2.500z" fill="#e8d84c"/></g>
 <use href="#tabico" x="137.500"/><use href="#tabico" x="275.500"/>
</svg>
<div class="t" style="left:184.500px;top:653px;font-size:8.700px;color:#222;letter-spacing:1.200px">新建画布1</div>
<div class="t" style="left:281px;top:653.500px;font-size:8.500px;color:#222">237%</div>
<div class="t" style="left:322px;top:653px;font-size:8.700px;color:#222;letter-spacing:1.200px">新建画布2</div>
<div class="t" style="left:418.500px;top:653.500px;font-size:8.500px;color:#222">168%</div>
<div class="t" style="left:460px;top:653px;font-size:8.700px;color:#222;letter-spacing:1.200px">新建画布2</div>
<div class="t" style="left:556px;top:653.500px;font-size:8.500px;color:#222">100%</div>


<!-- ================= FLOATING WINDOW ================= -->
<div class="a" id="floatwin" style="left:802px;top:31px;width:278px;height:338.500px;background:#ebebeb;border-left:1px solid #d8d8d8;border-bottom:1px solid #d4d4d4"></div>
<div class="a" style="left:802px;top:31px;width:278px;height:18.500px;background:#cbcbcb"></div>
<div class="a" style="left:808.500px;top:38px;width:8px;height:6px;background:#4c8a78"></div>
<div class="a" style="left:812.500px;top:39px;width:4px;height:4px;background:#eaf2ef"></div>
<div class="t" style="left:822.500px;top:35px;font-size:10.200px;font-weight:bold;color:#fafafa;transform:none;letter-spacing:.1px"><span style="font-size:8.700px">新建画布</span>2 (*) (100%)</div>
<div class="a" style="left:806px;top:51px;width:274px;height:303px;background:#fff;border-left:1.500px solid #a8a8a8;border-top:1.500px solid #a8a8a8"></div>
<!-- float h-scroll -->
<div class="a" style="left:806px;top:354px;width:274px;height:13px;background:#ececec"></div>
<div class="btn" style="left:806.500px;top:355px;width:11.500px;height:11.500px;background:#9c9c9c"></div>
<svg class="a" style="left:809px;top:357.500px" width="6" height="7" viewBox="0 0 6 7"><path d="M4.500 1v5l-3-2.500z" fill="#f0f0f0"/></svg>
<div class="a" style="left:888px;top:355px;width:141px;height:11.500px;background:#9a9a9a;border-radius:2px"></div>
<!-- reference picture -->
<svg class="a" style="left:812px;top:57.500px" width="268" height="295" viewBox="812 57.500 268 295">
 <defs>
  <filter id="b1" x="-20%" y="-20%" width="140%" height="140%"><feGaussianBlur stdDeviation="1.100"/></filter>
  <filter id="b2" x="-20%" y="-20%" width="140%" height="140%"><feGaussianBlur stdDeviation="1.800"/></filter>
  <clipPath id="cc"><circle cx="966.400" cy="215.700" r="158.400"/></clipPath>
 </defs>
 <rect x="812" y="57" width="268" height="296" fill="#6e6e67"/>
 <path d="M812 300l60 52h-60z" fill="#7a7870"/>
 <g filter="url(#b2)">
  <circle cx="966.400" cy="215.700" r="158.400" fill="#c7c8b9"/>
  <path d="M830 282L950 340L940 352L905 352L824 300z" fill="#cdbcae" opacity=".8" clip-path="url(#cc)"/>
 </g>
 <!-- stripes: continuous, pass behind the character -->
 <g filter="url(#b2)" stroke="#3b3b37" stroke-width="7" fill="none" stroke-linecap="round">
  <path d="M903 54L960 81L1014 107L1082 140" stroke-width="6.500"/>
  <path d="M816 51L912 101L1030 153L1082 181" stroke-width="8"/>
  <path d="M809 120L908 166L1008 218L1082 252"/>
  <path d="M809 156C828 172 850 189 875 200L925 215L1018 267L1082 299"/>
  <path d="M809 230L897 274L1000 323L1082 353"/>
 </g>
 <!-- ninja -->
 <g filter="url(#b1)">
  <!-- arms -->
  <path d="M902 121l20-3c4 30 8 58 12 88l-16 4c-8-30-12-58-16-89z" fill="#56666f" stroke="#2c3238" stroke-width="2"/>
  <path d="M1013 117l22 1c-4 34-12 62-20 90l-30-2c12-28 22-56 28-89z" fill="#56666f" stroke="#2c3238" stroke-width="2"/>
  <!-- hands -->
  <path d="M880 114c2-10 14-14 28-12c8 2 10 10 8 18l-14 2c-2-6-6-8-12-6c-4 2-8 2-10-2z" fill="#b6864f" stroke="#3a2c1c" stroke-width="1.800"/>
  <path d="M1018 104c6-8 20-8 30-2c4 4 4 10 0 12c-6-4-12-4-16 0l-12 2c-2-4-4-8-2-12z" fill="#b6864f" stroke="#3a2c1c" stroke-width="1.800"/>
  <!-- pants: raised leg -->
  <path d="M906 268c-8 10-8 30 8 38c14 6 28 8 34 4l14-12c4-6 8-8 12-8l2-30c-24 8-48 10-70 8z" fill="#3b3f4b" stroke="#24282e" stroke-width="2"/>
  <path d="M944 306l12-10l8 6l-12 14z" fill="#3f444e" stroke="#24282e" stroke-width="1.600"/>
  <path d="M938 320c2-6 8-8 14-4c2 4 0 8-4 10c-6 2-10-2-10-6z" fill="#4c525a" stroke="#24282e" stroke-width="1.600"/>
  <!-- standing leg -->
  <path d="M970 262c12 0 26-4 38-10c2 26 0 54-5 82h-25c-3-22-8-48-8-72z" fill="#3b3f4b" stroke="#24282e" stroke-width="2"/>
  <path d="M978 334h24c2 6 2 10-2 12h-20c-4-4-4-8-2-12z" fill="#474c56" stroke="#24282e" stroke-width="1.600"/>
  <ellipse cx="998" cy="345" rx="4" ry="2.600" fill="#f4f4f4"/>
  <!-- torso -->
  <path d="M926 194c-1 24-6 40-23 55c-3 7 1 12 9 15c30 7 60 5 86-8c8 3 18 8 25 6c2-8-1-16-9-24c-5-14-5-30-4-46z" fill="#5b6b74" stroke="#2a3036" stroke-width="2"/>
  <path d="M1006 244c8 6 14 12 16 18c-6 2-14 0-20-4z" fill="#6f858f"/>
  <!-- scarf -->
  <path d="M927 174c20 10 48 10 70 0l-5 26c-18 9-44 9-60 0z" fill="#4a5a56" stroke="#2a322f" stroke-width="1.600"/><path d="M930 186c20 8 42 8 64 0M932 194c18 6 40 6 58 0" stroke="#333d3a" stroke-width="1.400" fill="none"/>
  <!-- strap -->
  <path d="M978 196l-50 70" stroke="#2e3238" stroke-width="9"/>
  <path d="M938 210l28 44" stroke="#2e3238" stroke-width="4"/>
  <path d="M962 238h44" stroke="#2a2e34" stroke-width="5"/>
  <!-- hat / head -->
  <path d="M926 136c-2-28 20-44 50-42c28 2 40 14 36 32c-2 8-8 12-16 10z" fill="#4c5863" stroke="#2a3036" stroke-width="2"/>
  <path d="M970 96c20-2 40 6 42 26c0 6-4 10-8 12c-8-14-20-26-34-38z" fill="#5a6874"/>
  <path d="M928 124c24-8 52-8 78-2l-2 12c-24-4-50-4-74 2z" fill="#353a44"/>
  <!-- face band -->
  <path d="M916 140c4-8 12-10 20-8h54c8 0 14 2 16 6c0 8-8 12-18 12h-56c-10 0-16-4-16-10z" fill="#c4935e" stroke="#3a2c1c" stroke-width="1.600"/>
  <rect x="934" y="134.500" width="44" height="7.500" fill="#fbfbf6"/>
  <path d="M944 133l4 10M956 133v10M966 134l4 8" stroke="#30302c" stroke-width="2.200"/>
  <!-- mask -->
  <path d="M924 148c20 4 52 4 72 0c2 14-4 28-36 32c-30-2-38-16-36-32z" fill="#3a3f4a" stroke="#24282e" stroke-width="1.600"/>
  <!-- flower + leaves -->
  <g fill="#dc8cc4" stroke="#8a4878" stroke-width="1"><circle cx="939" cy="74" r="4"/><circle cx="945.500" cy="80" r="4"/><circle cx="942" cy="87.500" r="4"/><circle cx="934.500" cy="87" r="4"/><circle cx="932.500" cy="79" r="4"/></g>
  <circle cx="939" cy="81.500" r="2.600" fill="#5a2048"/>
  <path d="M944 88c2 4 4 8 6 10" stroke="#4a6a2c" stroke-width="1.500" fill="none"/>
  <ellipse cx="948" cy="101" rx="5" ry="3.600" fill="#6f9c3c" stroke="#2c3c1c" stroke-width="1.200" transform="rotate(-20 948 101)"/>
  <ellipse cx="958.500" cy="100" rx="5.500" ry="3.600" fill="#6f9c3c" stroke="#2c3c1c" stroke-width="1.200" transform="rotate(-35 958.500 100)"/>
 </g>
</svg>


<!-- ================= RIGHT PANEL ================= -->
<div class="a" id="rightpanel" style="left:952px;top:369.500px;width:128px;height:296px;background:#f5f5f5"></div>
<div class="a" style="left:960px;top:374.500px;width:12px;height:12px;background:#fff;border:1px solid #d2d2d2;border-radius:1px"></div>
<div class="t" style="left:975px;top:376px;font-size:8.800px;color:#222;letter-spacing:.9px">创建剪贴蒙版</div>
<div class="a" style="left:960px;top:389px;width:12.500px;height:13px;background:#fff;border:1px solid #cfcfcf;border-radius:50%"></div>
<div class="t" style="left:976px;top:391px;font-size:8.800px;color:#222;letter-spacing:.6px">指定为选区样本</div>
<div class="a" style="left:958px;top:404.500px;width:119px;height:260px;border:1px solid #e2e2e2;border-radius:2px;background:#f3f3f3"></div>
<svg class="a" style="left:958px;top:405px" width="119" height="38" viewBox="958 405 119 38" fill="none">
 <path d="M967 410.500h4.500l2.500 2.500v6.500h-7z" fill="#fff" stroke="#666" stroke-width="0.900"/>
 <path d="M985.500 410.500h7v8.500h-7z" fill="#fff" stroke="#777" stroke-width="0.900"/><path d="M987 417.500l4.500-5" stroke="#333" stroke-width="1.300"/>
 <path d="M1003.500 411h5l1.500 1.500v7h-6.500z" fill="#ddd" stroke="#c4c4c4" stroke-width="0.900"/>
 <path d="M1040.500 418l3.500-6.500l3.500 6.500z" stroke="#aaa" stroke-width="0.900"/><path d="M1041 416h6" stroke="#bbb" stroke-width="0.700"/><path d="M1046.500 419.500h2.500l-1.200 1.300z" fill="#222"/>
 <rect x="1061.500" y="411.500" width="8" height="7.500" fill="#555" stroke="#333" stroke-width="0.800"/><rect x="1063.500" y="413.500" width="4" height="3.500" fill="#f0f0f0"/>
 <path d="M968 428.500h4v6.500h-4z" stroke="#dcdcdc" stroke-width="1" fill="#ececec"/>
 <rect x="985.500" y="428" width="6" height="6.500" fill="#e6e6e6" stroke="#d6d6d6" stroke-width="0.900"/>
 <rect x="1003.500" y="427.500" width="7" height="8" fill="#fff" stroke="#666" stroke-width="0.900"/><path d="M1006 434l4-5" stroke="#333" stroke-width="1.300"/>
 <path d="M1022.500 429.500h6l-.6 6.500h-4.800z" fill="#555" stroke="#333" stroke-width="0.800"/><path d="M1021.500 429h8M1024.300 427.700h2.400" stroke="#333" stroke-width="1"/>
 <rect x="1061.500" y="428" width="4.500" height="4.500" stroke="#d4d4d4" stroke-width="0.900"/><rect x="1064.500" y="431" width="4.500" height="4.500" fill="#e2e2e2" stroke="#d4d4d4" stroke-width="0.900"/>
</svg>
<div class="a" style="left:960px;top:443px;width:104px;height:208px;background:#b1b1b1"></div>
<div class="a" style="left:1065px;top:443px;width:12px;height:208px;background:#e9e9e9"></div>
<div class="a" style="left:1065.500px;top:444.500px;width:11px;height:11px;background:#d4d4d4;border-radius:2px"></div>
<div class="a" style="left:1065.500px;top:640px;width:11px;height:11px;background:#d8d8d8;border-radius:2px"></div>
<div class="a" style="left:960px;top:652px;width:104px;height:12px;background:#e9e9e9"></div>
<div class="a" style="left:960px;top:652.500px;width:11px;height:11px;background:#d8d8d8;border-radius:2px"></div>
<div class="a" style="left:1053px;top:652.500px;width:11px;height:11px;background:#d8d8d8;border-radius:2px"></div>
<!-- layer 2 -->
<div class="a" style="left:963px;top:444.500px;width:97.500px;height:30px;background:#dedefb;border:1px solid #b8b8ec;border-radius:1px"></div>
<div class="a" style="left:966px;top:447.500px;width:12.500px;height:11.500px;background:#fff;border:1px solid #c8c8dc"></div>
<div class="a" style="left:966px;top:460.500px;width:12.500px;height:11.500px;background:#fff;border:1px solid #c8c8dc"></div>
<div class="a" style="left:981px;top:447px;width:25.500px;height:25px;background:#fff;border:1px solid #c8c8dc"></div>

<div class="t" style="left:1009px;top:446.500px;font-size:9px;color:#222;letter-spacing:.3px">图层2</div>
<div class="t" style="left:1009px;top:456px;font-size:8.500px;color:#222;letter-spacing:.2px">正常</div>
<div class="t" style="left:1009px;top:464.500px;font-size:8.500px;color:#222">100%</div>
<!-- layer 1 -->
<div class="a" style="left:963px;top:476px;width:97.500px;height:29px;background:#fff;border:1px solid #e4e4e4;border-radius:1px"></div>
<div class="a" style="left:966px;top:478.500px;width:12.500px;height:11.500px;background:#fff;border:1px solid #d8d8d8"></div>
<div class="a" style="left:966px;top:491.500px;width:12.500px;height:11.500px;background:#fff;border:1px solid #d8d8d8"></div>
<div class="a" style="left:981px;top:478px;width:25.500px;height:25px;background:#fff;border:1px solid #d8d8d8"></div>
<svg class="a" style="left:963px;top:444px" width="50" height="62" viewBox="963 444 50 62" fill="none">
 <path d="M968.500 453.300c1.800-2 5.500-2 7.300 0c-1.800 1.700-5.500 1.700-7.300 0z" fill="#222"/><path d="M968.300 451.600l1 .9M976 451.600l-1 .9M972.200 450.600v1" stroke="#444" stroke-width="0.600"/>
 <path d="M970 469l4.500-5" stroke="#888" stroke-width="1.100"/>
 <g stroke="#f2bfa8" stroke-width="0.700"><path d="M987 449.500l5 4.500l1.500 8M1000.500 450l-4.500 4l-1 8M992 454h4M992.500 462.500c-1.500 1-2.500 2.500-2 4.500l1.500 1.500M995 462.500l.5 8M993.500 449.500v3.500M992 462h3.500"/></g>
 <g stroke="#d4d4d4" stroke-width="0.700"><path d="M987 481l5 4.500l1.500 8M1000.500 481.500l-4.500 4l-1 8M992 485.500h4M992.500 494c-1.500 1-2.500 2.500-2 4.500l1.500 1.500M995 494l.5 8M993.500 481v3.500M992 493.500h3.500"/></g>
</svg>
<div class="t" style="left:1009px;top:477.500px;font-size:9px;color:#222;letter-spacing:.3px">图层1</div>
<div class="t" style="left:1009px;top:487px;font-size:8.500px;color:#222;letter-spacing:.2px">正常</div>
<div class="t" style="left:1009px;top:495.500px;font-size:8px;color:#3c9a7a">48%</div>


<!-- ================= STATUS BAR ================= -->
<div class="a" style="left:0;top:665px;width:1080px;height:20px;background:#f6f6f6"></div>
<div class="t" style="left:791.500px;top:669.500px;font-size:9px;color:#222;letter-spacing:.6px">内存使用量</div>
<div class="fld" style="left:836px;top:667px;width:93px;height:14px;border-color:#d6d6d6;background:#f4f4f4"></div>
<div class="a" style="left:837.500px;top:668.500px;width:4.500px;height:11px;background:#50d48c"></div>
<div class="t" style="left:839px;top:669.500px;font-size:9px;color:#222">4% (5%)</div>
<div class="t" style="left:936px;top:669.500px;font-size:9px;color:#222;letter-spacing:.5px">磁盘容量</div>
<div class="fld" style="left:972px;top:667px;width:94px;height:14px;border-color:#d6d6d6;background:#f4f4f4"></div>
<div class="a" style="left:973.500px;top:668.500px;width:80px;height:11px;background:#3cb6f4"></div>
<div class="t" style="left:975px;top:669.500px;font-size:9px;color:#222">89%</div>


<!-- ================= TASKBAR ================= -->
<div class="a" style="left:0;top:685px;width:1080px;height:35px;background:#3b3b3b"></div>
<div class="a" style="left:42px;top:685px;width:301px;height:35px;background:#f3f3f3"></div>
<div class="a" style="left:604px;top:685px;width:42px;height:35px;background:#6b6b6b"></div>
<div class="a" style="left:882px;top:685px;width:28px;height:35px;background:#575757"></div>
<div class="a" style="left:433px;top:718px;width:35px;height:2px;background:#949494"></div>
<div class="a" style="left:563px;top:718px;width:35px;height:2px;background:#949494"></div>
<div class="a" style="left:604px;top:718px;width:42px;height:2px;background:#b4b4b4"></div>
<svg class="a" style="left:0;top:685px" width="1080" height="35" viewBox="0 685 1080 35" fill="none">
 <g fill="#fff"><path d="M15 698.300l5-.7v5h-5zM20.800 697.500l6.200-.9v6h-6.200zM15 703.400h5v5l-5-.7zM20.800 703.400h6.200v6l-6.200-.9z"/></g>
 <circle cx="63.500" cy="699.500" r="5" stroke="#222" stroke-width="1.500"/><path d="M60 703.500l-6 6.500" stroke="#222" stroke-width="1.600"/>
 <circle cx="363.500" cy="702.500" r="6" stroke="#fff" stroke-width="2"/>
 <path d="M400 696.500h10v11h-10zM398 699.500v5M413 696.500v3M413 703v4.500M400 696.500h-2M400 707.500h-2" stroke="#e8e8e8" stroke-width="1.200"/>
 <path d="M443 703.500c0-6 4-9.500 8.500-9.500c5 0 8 3.500 8 8.500h-11.500c0 3 2.500 5 5.500 5c2 0 4-.5 5.500-1.500v3.500c-2 1-4 1.500-6.500 1.500c-5 0-8.500-3-8.500-7.500c0-3 2-5.500 4.500-6.500c-1 1.500-1.500 2.500-1.500 4h7c0-2-1.500-3.500-3.500-3.500c-3 0-6 2.500-7.500 6z" fill="#1a88e0"/>
 <path d="M485 695.500h6l1.500 2h10.500v13h-18z" fill="#e8b830"/><path d="M485 699.500h18v11h-18z" fill="#f8d860"/><path d="M489 705h10v5.500h-10z" fill="#4a9ae0"/><path d="M491 707.500h6v3h-6z" fill="#f8d860"/>
 <path d="M527 700l10.500-6.500l10.500 6.500v10h-21z" fill="#1a78c8"/><path d="M527 700.500h21v10h-21z" fill="#3aa8f0"/><path d="M527 700.500l10.500 6.500l10.500-6.500" stroke="#dff0ff" stroke-width="1.400"/>
 <circle cx="581" cy="702.500" r="10.500" fill="#1a84dc"/><rect x="576.500" y="695.500" width="9" height="14" rx="1.200" fill="#fff"/><rect x="578" y="697.500" width="6" height="9" fill="#5ab0f0"/>
 <rect x="615" y="695.500" width="18" height="14" fill="#f4f4f4"/><rect x="619.500" y="697" width="8" height="11" fill="#1a78d8"/><rect x="628" y="698" width="4" height="9" fill="#e4ecf4"/>
 <path d="M783 705.500l4.500-4.500l4.500 4.500" stroke="#eee" stroke-width="1.300"/>
 <path d="M803.500 708a7 7 0 0 1 7-7M801 708a9.500 9.500 0 0 1 9.500-9.500M806 708a4.500 4.500 0 0 1 4.500-4.500" stroke="#b4b4b4" stroke-width="1.100"/><circle cx="810" cy="707.500" r="1" fill="#bbb"/>
 <ellipse cx="829" cy="703.500" rx="4.500" ry="6.500" fill="#181818"/><ellipse cx="829" cy="706" rx="2.800" ry="3.500" fill="#f4f4f4"/><path d="M824.500 702.500c3 1.500 6 1.500 9 0v2c-3 1.500-6 1.500-9 0z" fill="#e01890"/><ellipse cx="829" cy="710" rx="4" ry="1.200" fill="#e8a020"/>
 <path d="M844.500 700.500h2.500l3-3v10l-3-3h-2.500z" stroke="#ddd" stroke-width="1"/><path d="M852 699.500c1.500 1.800 1.500 4.200 0 6M854 698c2.300 2.800 2.300 6.200 0 9" stroke="#ccc" stroke-width="0.900"/>
 <rect x="865.500" y="698.500" width="11" height="8" stroke="#f4f4f4" stroke-width="1.300"/><rect x="868" y="701" width="6" height="3" fill="#f4f4f4"/><path d="M864 696.500h3.500v3" stroke="#f4f4f4" stroke-width="1.200"/>
 <path d="M890 707c-1.500-3 1-5 3-3.500c1 1 0 3-1.500 3.500c2-3 6-9 8-10.500c2-1 3 .5 2 2c-1.500 2-5 4-7 4.500" stroke="#f4f4f4" stroke-width="1.400"/>
 <path d="M1003.800 696.500v11.500M1018.200 696.500v11.500M1007 708v-10.500l4 6.500l4-6.500v10.500" stroke="#fff" stroke-width="1.700" stroke-linejoin="miter"/>
 <circle cx="1020.500" cy="708.500" r="4.800" fill="#2a2a2a" stroke="#aaa" stroke-width="0.700"/>
 <path d="M1045.500 694.500h13v9.500h-4l-3 3v-3h-6z" fill="#fff"/><path d="M1047.500 697.500h9M1047.500 700.500h9" stroke="#3b3b3b" stroke-width="1"/>
 <circle cx="1061" cy="708.500" r="5.500" fill="#2a2a2a" stroke="#888" stroke-width="0.600"/>
</svg>
<div class="t" style="left:80px;top:695px;font-size:14.500px;color:#333;transform:scaleX(.965)">在这里输入你要搜索的内容</div>
<div class="t" style="left:912.500px;top:695px;font-size:14px;color:#fff;transform:scaleX(.95)">中</div>
<div class="t" style="left:946.500px;top:690px;font-size:10.500px;color:#fff;transform:none">13:24</div>
<div class="t" style="left:935.500px;top:706px;font-size:10.500px;color:#fff;transform:none">2020/8/10</div>
<div class="t" style="left:1018.700px;top:705.500px;font-size:6.500px;color:#eee;transform:none">2</div>
<div class="t" style="left:1058.400px;top:704.500px;font-size:8.500px;font-weight:bold;color:#fff;transform:none">2</div>


</body>
</html>
